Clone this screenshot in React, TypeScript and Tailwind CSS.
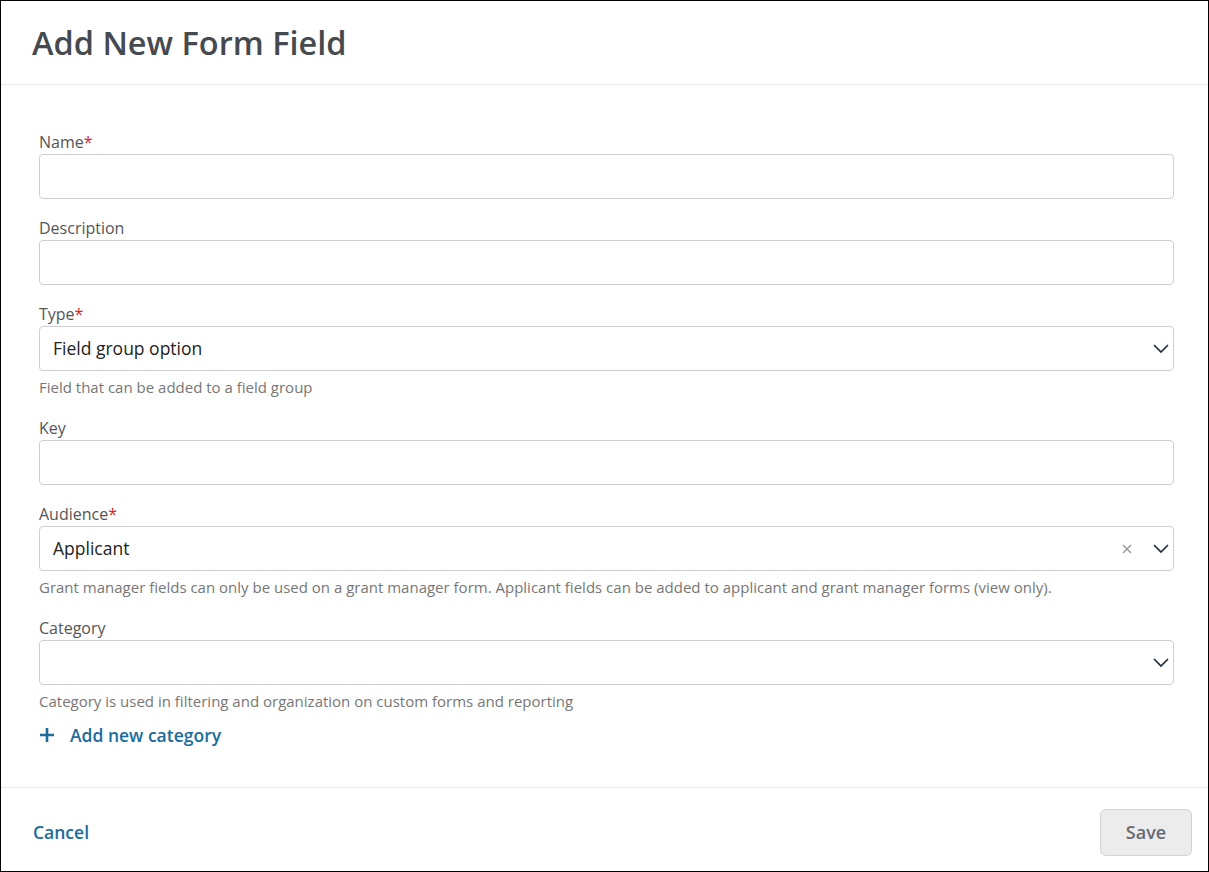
function Chevron() {
  return (
    <svg width="16" height="9" viewBox="0 0 16 9" fill="none" className="text-[#1f2d3d]">
      <path d="M1 1 L8 8 L15 1" stroke="currentColor" strokeWidth="1.7" />
    </svg>
  )
}

function Label({ text, required }: { text: string; required?: boolean }) {
  return (
    <label className="block text-base leading-5 text-[#555] mb-[2px]">
      {text}
      {required && <span className="text-[#d22]">*</span>}
    </label>
  )
}

function Box({ value, clear, select }: { value?: string; clear?: boolean; select?: boolean }) {
  return (
    <div className="h-[45px] border border-[#ccd0d5] rounded-[4px] flex items-center pl-[13px] pr-[4px] bg-white">
      <span className="flex-1 text-[17.5px] text-[#222]">{value}</span>
      {clear && (
        <svg width="10" height="10" viewBox="0 0 10 10" className="mr-[21px] text-[#9a9a9a]">
          <path d="M1 1 L9 9 M9 1 L1 9" stroke="currentColor" strokeWidth="1.5" />
        </svg>
      )}
      {select && <Chevron />}
    </div>
  )
}

function Help({ text }: { text: string }) {
  return <p className="mt-[5px] text-[15px] leading-[23px] text-[#777]">{text}</p>
}

export default function App() {
  return (
    <div className="h-[872px] border border-black flex flex-col bg-white font-['Open_Sans',sans-serif]">
      <div className="h-[84px] border-b border-[#e6e9ec] flex items-center pl-[31px]">
        <h1 className="text-[32.5px] font-semibold text-[#464a4f] mt-[1px]">Add New Form Field</h1>
      </div>
      <div className="flex-1 pl-[38px] pr-[34px] pt-[47px] flex flex-col gap-[19px]">
        <div>
          <Label text="Name" required />
          <Box />
        </div>
        <div>
          <Label text="Description" />
          <Box />
        </div>
        <div>
          <Label text="Type" required />
          <Box value="Field group option" select />
          <Help text="Field that can be added to a field group" />
        </div>
        <div>
          <Label text="Key" />
          <Box />
        </div>
        <div>
          <Label text="Audience" required />
          <Box value="Applicant" clear select />
          <Help text="Grant manager fields can only be used on a grant manager form. Applicant fields can be added to applicant and grant manager forms (view only)." />
        </div>
        <div>
          <Label text="Category" />
          <Box select />
          <Help text="Category is used in filtering and organization on custom forms and reporting" />
          <button className="mt-[10px] flex items-center gap-[15px] text-[17.5px] leading-6 font-semibold text-[#1b6c9c]">
            <svg width="16" height="16" viewBox="0 0 16 16">
              <path d="M8 1 V15 M1 8 H15" stroke="currentColor" strokeWidth="2.6" />
            </svg>
            Add new category
          </button>
        </div>
      </div>
      <div className="h-[84px] border-t border-[#e6e9ec] flex items-center justify-between pl-[32px] pr-[16px] pt-[5px]">
        <button className="text-[17.5px] font-semibold text-[#1b6c9c]">Cancel</button>
        <button className="w-[92px] h-[47px] bg-[#ececec] border border-[#d2d2d2] rounded-[6px] text-lg font-semibold text-[#666a70]">
          Save
        </button>
      </div>
    </div>
  )
}
